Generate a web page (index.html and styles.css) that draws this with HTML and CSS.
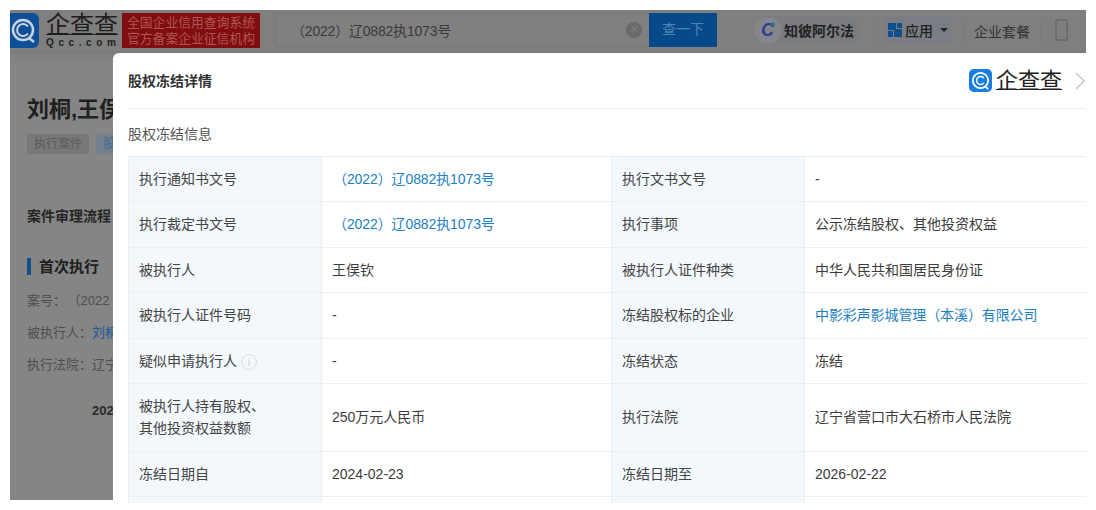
FILE: index.html
```html
<!DOCTYPE html>
<html lang="zh">
<head>
<meta charset="utf-8">
<title>股权冻结详情</title>
<link rel="stylesheet" href="styles.css">
</head>
<body>
<div class="stage">
  <div class="page">
    <header class="topbar">
      <svg class="logo-mark" viewBox="0 0 29 35"><path d="M0 0h23a6 6 0 0 1 6 6v23a6 6 0 0 1-6 6H0z" fill="#0f4f9a"/><circle cx="13" cy="17" r="10" fill="none" stroke="#c9d3de" stroke-width="2.5"/><path d="M18 13.5a6 6 0 1 0 0 7" fill="none" stroke="#c9d3de" stroke-width="2"/><path d="M19 25l5 4" stroke="#c9d3de" stroke-width="2.5"/></svg>
      <div class="brand"><div class="brand-cn">企查查</div><div class="brand-en">Qcc.com</div></div>
      <div class="badge"><span>全国企业信用查询系统</span><span>官方备案企业征信机构</span></div>
      <div class="search">
        <span class="search-text">（2022）辽0882执1073号</span>
        <span class="search-clear">×</span>
        <span class="search-btn">查一下</span>
      </div>
      <div class="alpha">
        <span class="alpha-icon">C<i></i></span><span class="alpha-text">知彼阿尔法</span>
      </div>
      <span class="sep"></span>
      <div class="apps">
        <svg class="apps-icon" viewBox="0 0 14 14"><rect width="8" height="7" fill="#0f4f8a"/><rect x="9" width="5" height="5" fill="#0f4f8a"/><rect y="8" width="5" height="6" fill="#0f4f8a"/><rect x="6" y="6" width="8" height="8" fill="#0f4f8a"/></svg>
        <span>应用</span><i class="caret"></i>
      </div>
      <span class="sep"></span>
      <span class="plan">企业套餐</span>
      <span class="sep"></span>
      <span class="phone"></span>
    </header>
    <div class="content">
      <h1 class="case-title">刘桐,王俣</h1>
      <div class="tags"><span class="tag">执行案件</span><span class="tag tag-blue">股权</span></div>
      <div class="flow-title">案件审理流程</div>
      <div class="flow-head">首次执行</div>
      <p class="flow-line">案号：<span class="flow-num">（2022</span></p>
      <p class="flow-line">被执行人：<span class="flow-link">刘桐</span></p>
      <p class="flow-line">执行法院：辽宁</p>
      <p class="flow-year">2024</p>
    </div>
  </div>

  <section class="modal">
    <div class="modal-head">
      <h2 class="modal-title">股权冻结详情</h2>
      <div class="modal-brand">
        <svg class="modal-logo" viewBox="0 0 24 24"><rect width="24" height="24" rx="5" fill="#1a7ee0"/><circle cx="12" cy="12" r="8" fill="none" stroke="#fff" stroke-width="1.8"/><path d="M15.5 9.5a4.2 4.2 0 1 0 0 5" fill="none" stroke="#fff" stroke-width="1.5"/><path d="M17 18l3 3" stroke="#fff" stroke-width="1.8"/></svg>
        <span class="modal-brand-text">企查查</span>
        <svg class="modal-close" viewBox="0 0 12 20"><path d="M1 1l9 9-9 9" fill="none" stroke="#c4c4c4" stroke-width="1.5"/></svg>
      </div>
    </div>
    <div class="sub-title">股权冻结信息</div>
    <table class="info">
      <colgroup><col class="c1"><col class="c2"><col class="c3"><col class="c4"></colgroup>
      <tr class="r45"><th>执行通知书文号</th><td class="indent"><a>（2022）辽0882执1073号</a></td><th>执行文书文号</th><td>-</td></tr>
      <tr class="r46"><th>执行裁定书文号</th><td class="indent"><a>（2022）辽0882执1073号</a></td><th>执行事项</th><td>公示冻结股权、其他投资权益</td></tr>
      <tr class="r45"><th>被执行人</th><td>王俣钦</td><th>被执行人证件种类</th><td>中华人民共和国居民身份证</td></tr>
      <tr class="r46"><th>被执行人证件号码</th><td>-</td><th>冻结股权标的企业</th><td><a>中影彩声影城管理（本溪）有限公司</a></td></tr>
      <tr class="r45"><th>疑似申请执行人 <span class="info-dot">i</span></th><td>-</td><th>冻结状态</th><td>冻结</td></tr>
      <tr class="r68"><th>被执行人持有股权、<br>其他投资权益数额</th><td>250万元人民币</td><th>执行法院</th><td>辽宁省营口市大石桥市人民法院</td></tr>
      <tr class="r45"><th>冻结日期自</th><td>2024-02-23</td><th>冻结日期至</th><td>2026-02-22</td></tr>
      <tr class="r45"><th></th><td></td><th></th><td></td></tr>
    </table>
  </section>
</div>
</body>
</html>
```
FILE: styles.css
```css
* { box-sizing: border-box; }
html, body { margin: 0; height: 100%; background: #fff; }
body { font-family: "Liberation Sans", "Noto Sans CJK SC", sans-serif; color: #333; overflow: hidden; }
.stage { position: relative; width: 1096px; height: 510px; overflow: hidden; padding: 10px; }
.page { width: 1076px; height: 490px; background: #858585; overflow: hidden; }

.topbar { height: 43px; background: #7f7f7f; display: flex; align-items: flex-start; padding-top: 3px; border-bottom: 1px solid #777; box-shadow: 0 5px 8px rgba(0,0,0,.04); }
.logo-mark { width: 29px; height: 35px; flex: none; margin-right: 7px; }
.brand { width: 71px; flex: none; margin-right: 5px; }
.brand-cn { font-size: 24px; line-height: 24px; color: #1e1e1e; white-space: nowrap; text-decoration: underline; text-underline-offset: 1px; text-decoration-thickness: 1px; }
.brand-en { font-size: 10px; line-height: 11px; letter-spacing: 4.6px; color: #222; font-weight: 700; white-space: nowrap; }
.badge { width: 138px; height: 35px; flex: none; background: #800d10; color: #b05555; font-size: 12.8px; line-height: 16px; display: flex; flex-direction: column; align-items: center; justify-content: center; white-space: nowrap; }
.search { width: 442px; height: 34px; flex: none; margin-left: 15px; display: flex; align-items: center; border: 1px solid #777; border-right: 0; background: #808080; border-radius: 2px; }
.search-text { flex: 1; font-size: 14px; letter-spacing: -.2px; color: #3a3a3a; margin-left: 15px; white-space: nowrap; }
.search-clear { width: 16px; height: 16px; border-radius: 50%; background: #6a6a6a; color: #808080; font-size: 14px; line-height: 15px; text-align: center; margin-right: 7px; }
.search-btn { width: 68px; height: 34px; background: #064a8a; color: #4f84b0; font-size: 14px; line-height: 33px; text-align: center; }
.alpha { height: 28px; margin: 3px 0 0 37px; display: flex; align-items: center; flex: none; background: #7a7c80; border-radius: 14px; padding-right: 5px; }
.alpha-icon { position: relative; width: 27px; height: 27px; border-radius: 50%; background: #84868c; color: #2c3f8f; font: italic 700 18px/27px "Liberation Sans", sans-serif; text-align: center; margin-right: 3px; }
.alpha-icon i { position: absolute; top: 5px; right: 6px; width: 4px; height: 4px; background: #2a7f8a; border-radius: 50%; }
.alpha-text { font-size: 14px; font-weight: 700; color: #222; white-space: nowrap; }
.sep { width: 1px; height: 22px; background: #797979; margin-top: 6px; flex: none; }
.alpha + .sep { margin-left: 15px; }
.apps { height: 28px; margin: 3px 12px 0 10px; padding: 0 3px; display: flex; align-items: center; gap: 3px; background: #7a7e84; font-size: 14px; color: #222; flex: none; font-weight: 500; }
.apps-icon { width: 14px; height: 14px; }
.caret { width: 0; height: 0; border: 4px solid transparent; border-top-color: #222; border-bottom: 0; margin-left: 4px; }
.plan { font-size: 14px; color: #333; margin: 8px 10px 0 10px; white-space: nowrap; flex: none; }
.phone { width: 13px; height: 22px; border: 2px solid #6c6c6c; border-radius: 2px; margin: 6px 0 0 14px; flex: none; }

.content { width: 103px; height: 447px; overflow: hidden; padding-left: 17px; }
.case-title { margin: 43px 0 0; font-size: 22px; line-height: 28px; font-weight: 700; color: #202020; white-space: nowrap; }
.tags { display: flex; gap: 7px; margin-top: 10px; }
.tag { font-size: 12px; line-height: 20px; height: 20px; padding: 0 7px; color: #5a5a5a; background: #787878; white-space: nowrap; flex: none; }
.tag-blue { color: #3d6d9a; background: #75808c; }
.flow-title { font-size: 14px; font-weight: 700; color: #262626; margin-top: 52px; line-height: 20px; white-space: nowrap; }
.flow-head { font-size: 15px; font-weight: 700; color: #202020; margin-top: 32px; line-height: 17px; border-left: 4px solid #0f4f8a; padding-left: 8px; height: 17px; white-space: nowrap; }
.flow-line { margin: 12px 0 0; font-size: 13px; line-height: 20px; color: #4e4e4e; white-space: nowrap; }
.flow-head + .flow-line { margin-top: 16px; }
.flow-num { margin-left: 8px; }
.flow-link { color: #1c5a96; }
.flow-year { margin: 26px 0 0 65px; font-size: 13px; font-weight: 700; color: #2a2a2a; line-height: 20px; }

.modal { position: absolute; left: 113px; top: 53px; width: 973px; height: 450px; background: #fff; border-radius: 6px 0 0 0; padding-left: 15px; overflow: hidden; }
.modal-head { width: 958px; height: 56px; border-bottom: 1px solid #eeeeee; display: flex; align-items: center; justify-content: space-between; }
.modal-title { margin: 0; font-size: 14px; font-weight: 700; color: #333; line-height: 56px; }
.modal-brand { display: flex; align-items: center; }
.modal-logo { width: 23px; height: 23px; margin-right: 4px; }
.modal-brand-text { font-size: 22px; line-height: 26px; color: #222; text-decoration: underline; text-underline-offset: 1px; text-decoration-thickness: 1px; }
.modal-close { width: 11px; height: 18px; margin: 0 0 0 13px; }
.sub-title { height: 47px; font-size: 14px; line-height: 50px; color: #555; }
.info { width: 958px; border-collapse: collapse; table-layout: fixed; border-top: 1px solid #e6eef5; }
.c1 { width: 193px; } .c2 { width: 290px; } .c3 { width: 193px; } .c4 { width: 282px; }
.info th, .info td { font-size: 14px; line-height: 22px; font-weight: 400; text-align: left; padding: 0 10px; border-bottom: 1px solid #edf0f3; color: #333; }
.info th { background: #f3f8fc; border-left: 1px solid #e8eef4; border-right: 1px solid #e8eef4; color: #444; }
.info td { color: #3c3c3c; }
.info a { color: #1c80c4; letter-spacing: -.1px; }
.info td.indent { padding-left: 11px; }
.r45 { height: 45px; } .r46 { height: 46px; } .r68 { height: 68px; }
.r46 th, .r46 td, .r68 th, .r68 td { padding-bottom: 2px; }
.info-dot { display: inline-block; width: 16px; height: 16px; border: 1px solid #dedede; border-radius: 50%; color: #d0d0d0; font-size: 11px; line-height: 14px; text-align: center; vertical-align: 0; }
```
